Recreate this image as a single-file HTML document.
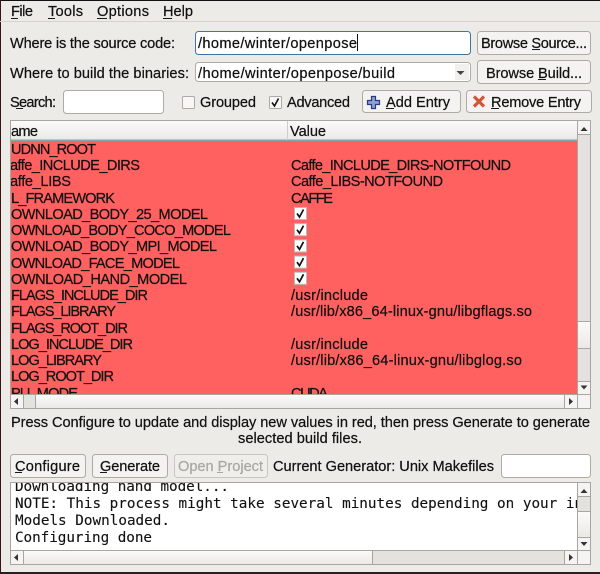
<!DOCTYPE html>
<html><head><meta charset="utf-8"><style>
html,body{margin:0;padding:0;background:#edebe7;width:600px;height:574px;overflow:hidden}
svg{display:block;filter:blur(.3px)}
text{font-family:"Liberation Sans",sans-serif;font-size:14.6px;fill:#111;stroke:#111;stroke-width:.22px}
.m{font-family:"DejaVu Sans Mono","Liberation Mono",monospace;font-size:14.3px;fill:#111;stroke:#111;stroke-width:.12px}
.d{fill:#aaa8a4;stroke:#aaa8a4}
.btn{fill:#f4f3f1;stroke:#aeaba5}
.inp{fill:#fff;stroke:#aeaba5}
.tb{fill:#f5f4f2}
.tr{fill:#e3e2df}
</style></head><body>
<svg width="600" height="574" viewBox="0 0 600 574" xmlns="http://www.w3.org/2000/svg">
<defs>
<linearGradient id="g" x1="0" y1="0" x2="0" y2="1"><stop offset="0" stop-color="#fbfaf9"/><stop offset="1" stop-color="#ebe9e5"/></linearGradient>
<clipPath id="redclip"><rect x="11" y="141" width="566" height="253"/></clipPath>
<clipPath id="logclip"><rect x="11" y="483" width="566" height="67"/></clipPath>
</defs>
<rect width="600" height="574" fill="#edebe7"/>
<rect x="0" y="0" width="600" height="1" fill="#111"/>
<rect x="0" y="0" width="1" height="574" fill="#3a1010"/>
<rect x="0" y="572" width="600" height="2" fill="#222"/>

<!-- menu -->
<text x="11" y="16" textLength="22">File</text>
<text x="48" y="16" textLength="35">Tools</text>
<text x="97" y="16" textLength="52">Options</text>
<text x="163" y="16" textLength="30">Help</text>
<rect x="11" y="18" width="7" height="1" fill="#1a1a1a"/>
<rect x="48" y="18" width="7" height="1" fill="#1a1a1a"/>
<rect x="97" y="18" width="10" height="1" fill="#1a1a1a"/>
<rect x="163" y="18" width="9" height="1" fill="#1a1a1a"/>
<rect x="0" y="21" width="600" height="1" fill="#d6d3ce"/>

<!-- source row -->
<text x="10" y="48" textLength="165">Where is the source code:</text>
<rect x="195.500" y="31.500" width="275" height="23" rx="3" fill="#fff" stroke="#3f75a6"/>
<text x="198" y="48" textLength="159">/home/winter/openpose</text>
<rect x="357" y="34" width="1" height="17" fill="#111"/>
<rect x="477.500" y="31.500" width="113" height="23" rx="3" class="btn"/>
<text x="481" y="48" textLength="106">Browse Source...</text>
<rect x="532" y="49" width="8" height="1" fill="#1a1a1a"/>

<!-- build row -->
<text x="10" y="78" textLength="179">Where to build the binaries:</text>
<rect x="195.500" y="62.500" width="275" height="19" rx="3" class="inp"/>
<text x="198" y="78" textLength="197">/home/winter/openpose/build</text>
<rect x="455" y="64" width="14" height="16" fill="#f1f0ee"/>
<path d="M456.500 71h8l-4 4z" fill="#444"/>
<rect x="477.500" y="60.500" width="113" height="23" rx="3" class="btn"/>
<text x="486" y="78" textLength="96">Browse Build...</text>
<rect x="538" y="79" width="8" height="1" fill="#1a1a1a"/>

<!-- search row -->
<text x="10" y="107" textLength="46">Search:</text>
<rect x="16" y="108" width="7" height="1" fill="#1a1a1a"/>
<rect x="63.500" y="90.500" width="100" height="23" rx="3" class="inp"/>
<rect x="182.500" y="96.500" width="12" height="12" rx="1" fill="#f8f7f6" stroke="#aeaba5"/>
<text x="200" y="107" textLength="56">Grouped</text>
<rect x="269.500" y="96.500" width="12" height="12" rx="1" fill="#f8f7f6" stroke="#aeaba5"/>
<path d="M272 102.500l2.500 3.500 4-7.500" fill="none" stroke="#111" stroke-width="1.600"/>
<text x="287" y="107" textLength="63">Advanced</text>
<rect x="362.500" y="90.500" width="98" height="22" rx="3" class="btn"/>
<path d="M371.500 96.500h4v4h4v4h-4v4h-4v-4h-4v-4h4z" fill="#8d9fd6" stroke="#2b3a7a" stroke-width="1.200"/>
<text x="386" y="107" textLength="64">Add Entry</text>
<rect x="386" y="108" width="8" height="1" fill="#1a1a1a"/>
<rect x="466.500" y="90.500" width="125" height="22" rx="3" class="btn"/>
<path d="M474 96.500l10 10M484 96.500l-10 10" stroke="#d2553a" stroke-width="3.200" fill="none"/>
<text x="491" y="107" textLength="90">Remove Entry</text>
<rect x="491" y="108" width="8" height="1" fill="#1a1a1a"/>

<!-- table -->
<rect x="10.500" y="120.500" width="580" height="288" fill="#e3e2df" stroke="#a8a6a1"/>
<rect x="11" y="121" width="566" height="19" fill="url(#g)"/>
<rect x="11" y="139" width="566" height="1" fill="#c4c2bd"/>
<rect x="287" y="121" width="1" height="19" fill="#cfcdc8"/>
<text x="11" y="136" textLength="27">ame</text>
<text x="290" y="136" textLength="36">Value</text>
<rect x="11" y="140" width="566" height="1" fill="#7fa8a8"/>
<rect x="11" y="141" width="566" height="253" fill="#ff6060"/>
<g clip-path="url(#redclip)">
<text x="11" y="154" textLength="85">UDNN_ROOT</text>
<text x="10" y="170" textLength="130">affe_INCLUDE_DIRS</text>
<text x="10" y="186" textLength="61">affe_LIBS</text>
<text x="11" y="203" textLength="104">L_FRAMEWORK</text>
<text x="11" y="219" textLength="197">OWNLOAD_BODY_25_MODEL</text>
<text x="11" y="235" textLength="220">OWNLOAD_BODY_COCO_MODEL</text>
<text x="11" y="251" textLength="206">OWNLOAD_BODY_MPI_MODEL</text>
<text x="11" y="268" textLength="169">OWNLOAD_FACE_MODEL</text>
<text x="11" y="284" textLength="176">OWNLOAD_HAND_MODEL</text>
<text x="11" y="300" textLength="137">FLAGS_INCLUDE_DIR</text>
<text x="11" y="316" textLength="105">FLAGS_LIBRARY</text>
<text x="11" y="333" textLength="117">FLAGS_ROOT_DIR</text>
<text x="11" y="349" textLength="122">LOG_INCLUDE_DIR</text>
<text x="11" y="365" textLength="91">LOG_LIBRARY</text>
<text x="11" y="381" textLength="103">LOG_ROOT_DIR</text>
<text x="11" y="398" textLength="67">PU_MODE</text>
<text x="291" y="170" textLength="220">Caffe_INCLUDE_DIRS-NOTFOUND</text>
<text x="291" y="186" textLength="152">Caffe_LIBS-NOTFOUND</text>
<text x="291" y="203" textLength="42">CAFFE</text>
<text x="291" y="300" textLength="77">/usr/include</text>
<text x="291" y="316" textLength="241">/usr/lib/x86_64-linux-gnu/libgflags.so</text>
<text x="291" y="349" textLength="77">/usr/include</text>
<text x="291" y="365" textLength="231">/usr/lib/x86_64-linux-gnu/libglog.so</text>
<text x="291" y="398" textLength="37">CUDA</text>
</g>
<!-- checkboxes -->
<g fill="#fff" stroke="#a9c4c0">
<rect x="294.500" y="207.500" width="12" height="12"/>
<rect x="294.500" y="223.700" width="12" height="12"/>
<rect x="294.500" y="239.900" width="12" height="12"/>
<rect x="294.500" y="256.100" width="12" height="12"/>
<rect x="294.500" y="272.300" width="12" height="12"/>
</g>
<g fill="none" stroke="#111" stroke-width="1.700">
<path d="M297 213.500l2.500 3.500 4-7.500"/>
<path d="M297 229.700l2.500 3.500 4-7.500"/>
<path d="M297 245.900l2.500 3.500 4-7.500"/>
<path d="M297 262.100l2.500 3.500 4-7.500"/>
<path d="M297 278.300l2.500 3.500 4-7.500"/>
</g>
<!-- table v scrollbar -->
<rect x="577" y="121" width="1" height="287" fill="#a8a6a1"/>
<rect x="578" y="121" width="12" height="13" class="tb"/>
<rect x="578" y="134" width="12" height="1" fill="#a8a6a1"/>
<path d="M580.500 131l3.500-4 3.500 4z" fill="#333"/>
<rect x="578" y="135" width="12" height="246" class="tr"/>
<rect x="578" y="321" width="12" height="1" fill="#a8a6a1"/>
<rect x="578" y="322" width="12" height="26" fill="url(#g)"/>
<rect x="578" y="348" width="12" height="1" fill="#a8a6a1"/>
<rect x="578" y="381" width="12" height="13" class="tb"/>
<rect x="578" y="381" width="12" height="1" fill="#a8a6a1"/>
<path d="M580.500 385.500l3.500 4 3.500-4z" fill="#333"/>
<!-- table h scrollbar -->
<rect x="11" y="394" width="579" height="1" fill="#a8a6a1"/>
<rect x="11" y="395" width="12" height="13" class="tb"/>
<path d="M18 398l-4 3.500 4 3.500z" fill="#333"/>
<rect x="23" y="395" width="1" height="13" fill="#a8a6a1"/>
<rect x="24" y="395" width="11" height="13" class="tr"/>
<rect x="35" y="395" width="1" height="13" fill="#a8a6a1"/>
<rect x="36" y="395" width="528" height="13" fill="url(#g)"/>
<rect x="564" y="395" width="1" height="13" fill="#a8a6a1"/>
<rect x="565" y="395" width="12" height="13" class="tb"/>
<path d="M569 398l4 3.500-4 3.500z" fill="#333"/>
<rect x="578" y="395" width="12" height="13" class="tb"/>

<!-- info -->
<text x="11" y="427" textLength="579">Press Configure to update and display new values in red, then press Generate to generate</text>
<text x="238" y="443" textLength="124">selected build files.</text>

<!-- bottom buttons -->
<rect x="10.500" y="454.500" width="75" height="23" rx="3" class="btn"/>
<text x="15" y="471" textLength="65">Configure</text>
<rect x="15" y="472" width="7" height="1" fill="#1a1a1a"/>
<rect x="92.500" y="454.500" width="75" height="23" rx="3" class="btn"/>
<text x="100" y="471" textLength="60">Generate</text>
<rect x="100" y="472" width="7" height="1" fill="#1a1a1a"/>
<rect x="174.500" y="454.500" width="93" height="23" rx="3" fill="#efeeeb" stroke="#c8c6c1"/>
<text x="178" y="471" textLength="85" class="d">Open Project</text>
<rect x="217" y="472" width="6" height="1" fill="#aaa8a4"/>
<text x="273" y="471" textLength="221">Current Generator: Unix Makefiles</text>
<rect x="501.500" y="454.500" width="89" height="23" rx="3" class="inp"/>

<!-- log -->
<rect x="10.500" y="482.500" width="580" height="82" fill="#fff" stroke="#a8a6a1"/>
<g clip-path="url(#logclip)">
<text class="m" x="15" y="491" textLength="214">Downloading hand model...</text>
<text class="m" x="15" y="508">NOTE: This process might take several minutes depending on your internet connection.</text>
<text class="m" x="15" y="525" textLength="155">Models Downloaded.</text>
<text class="m" x="15" y="542" textLength="137">Configuring done</text>
</g>
<rect x="577" y="483" width="1" height="81" fill="#a8a6a1"/>
<rect x="578" y="483" width="12" height="13" class="tb"/>
<path d="M580.500 493l3.500-4 3.500 4z" fill="#333"/>
<rect x="578" y="496" width="12" height="1" fill="#a8a6a1"/>
<rect x="578" y="497" width="12" height="14" class="tr"/>
<rect x="578" y="511" width="12" height="1" fill="#a8a6a1"/>
<rect x="578" y="512" width="12" height="25" fill="url(#g)"/>
<rect x="578" y="537" width="12" height="1" fill="#a8a6a1"/>
<rect x="578" y="538" width="12" height="12" class="tb"/>
<path d="M580.500 542l3.500 4 3.500-4z" fill="#333"/>
<rect x="11" y="550" width="579" height="1" fill="#a8a6a1"/>
<rect x="11" y="551" width="12" height="13" class="tb"/>
<path d="M18 554l-4 3.500 4 3.500z" fill="#333"/>
<rect x="23" y="551" width="1" height="13" fill="#a8a6a1"/>
<rect x="24" y="551" width="348" height="13" fill="url(#g)"/>
<rect x="372" y="551" width="1" height="13" fill="#a8a6a1"/>
<rect x="373" y="551" width="191" height="13" class="tr"/>
<rect x="564" y="551" width="1" height="13" fill="#a8a6a1"/>
<rect x="565" y="551" width="12" height="13" class="tb"/>
<path d="M569 554l4 3.500-4 3.500z" fill="#333"/>
<rect x="578" y="551" width="12" height="13" class="tb"/>
</svg>
</body></html>
